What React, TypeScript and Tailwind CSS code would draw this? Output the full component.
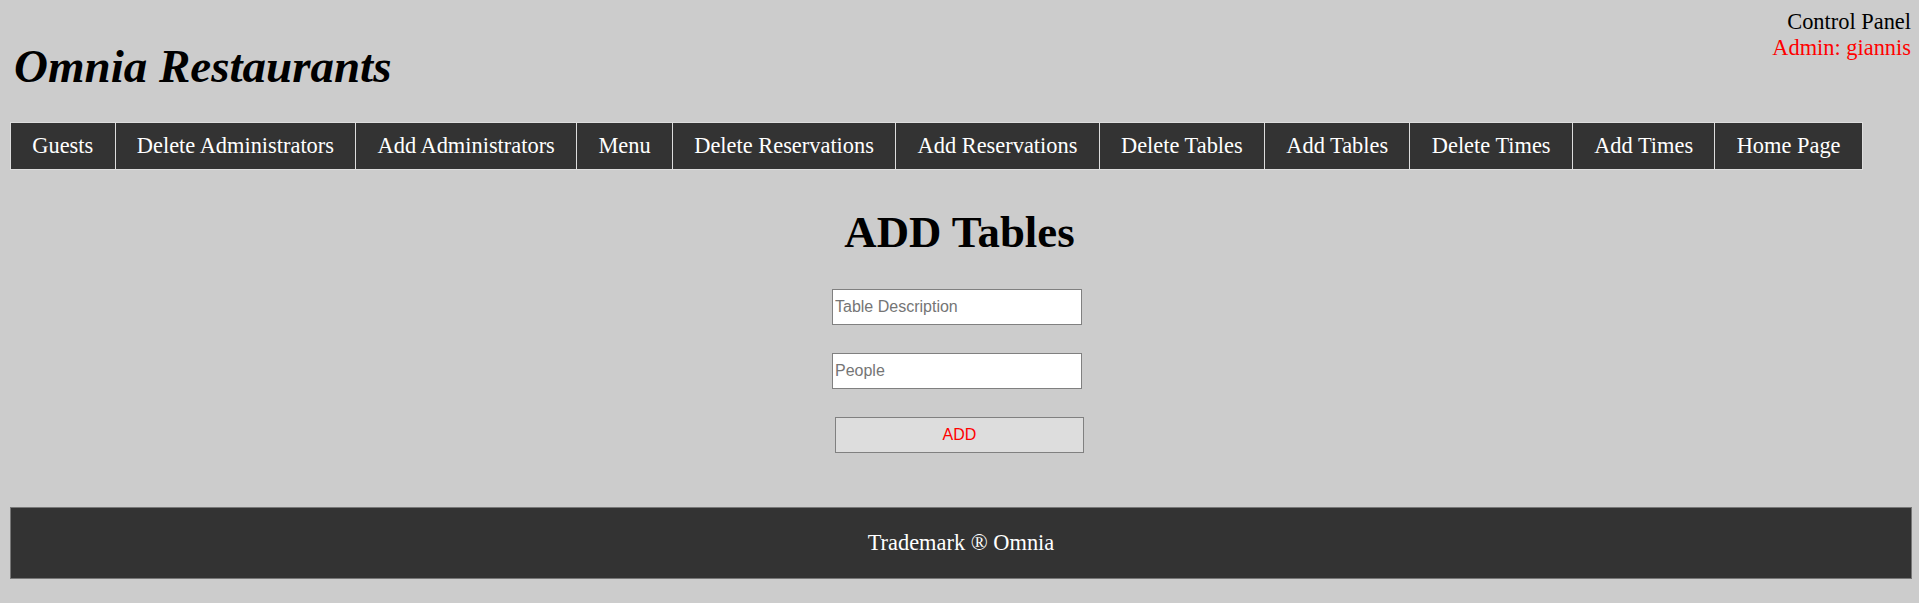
import React from 'react';

const links = [
  'Guests',
  'Delete Administrators',
  'Add Administrators',
  'Menu',
  'Delete Reservations',
  'Add Reservations',
  'Delete Tables',
  'Add Tables',
  'Delete Times',
  'Add Times',
  'Home Page',
];

const App: React.FC = () => {
  return (
    <div className="min-h-[603px] bg-[#cccccc] px-[10px] pt-[9px] font-['Liberation_Serif','Times_New_Roman',serif]">
      <div className="flex items-start justify-between">
        <h1 className="mt-[30px] pl-[4px] text-[47px] font-bold italic leading-[54px] text-black">Omnia Restaurants</h1>
        <div className="-mr-[2px] text-right text-[22.4px] leading-[25.76px]">
          <div className="text-black">Control Panel</div>
          <div className="text-[#ff0000]">Admin: giannis</div>
        </div>
      </div>

      <ul className="mt-[29px] flex w-fit border-y border-l border-[#dddddd] bg-[#333333]">
        {links.map((l) => (
          <li key={l} className="flex h-[46px] items-center border-r border-[#dddddd] px-[21.3px] text-[22.4px] text-white">
            {l}
          </li>
        ))}
      </ul>

      <div className="flex flex-col items-center">
        <h2 className="mt-[37px] text-[44.8px] font-bold leading-[51.5px] text-black">ADD Tables</h2>
        <input
          type="text"
          placeholder="Table Description"
          className="mt-[30px] -ml-[5px] h-[36px] w-[250px] border border-[#808080] bg-white px-[2px] font-['Liberation_Sans',Arial,sans-serif] text-[16px] placeholder:text-[#757575] outline-none"
        />
        <input
          type="text"
          placeholder="People"
          className="mt-[28px] -ml-[5px] h-[36px] w-[250px] border border-[#808080] bg-white px-[2px] font-['Liberation_Sans',Arial,sans-serif] text-[16px] placeholder:text-[#757575] outline-none"
        />
        <button className="mt-[28px] h-[36px] w-[249px] border border-[#808080] bg-[#dddddd] font-['Liberation_Sans',Arial,sans-serif] text-[16px] text-[#ff0000]">
          ADD
        </button>
      </div>

      <footer className="mt-[54px] mr-[-3px] flex h-[72px] items-center justify-center border border-[#777777] bg-[#333333] text-[22.4px] text-white">
        Trademark ® Omnia
      </footer>
    </div>
  );
};

export default App;
